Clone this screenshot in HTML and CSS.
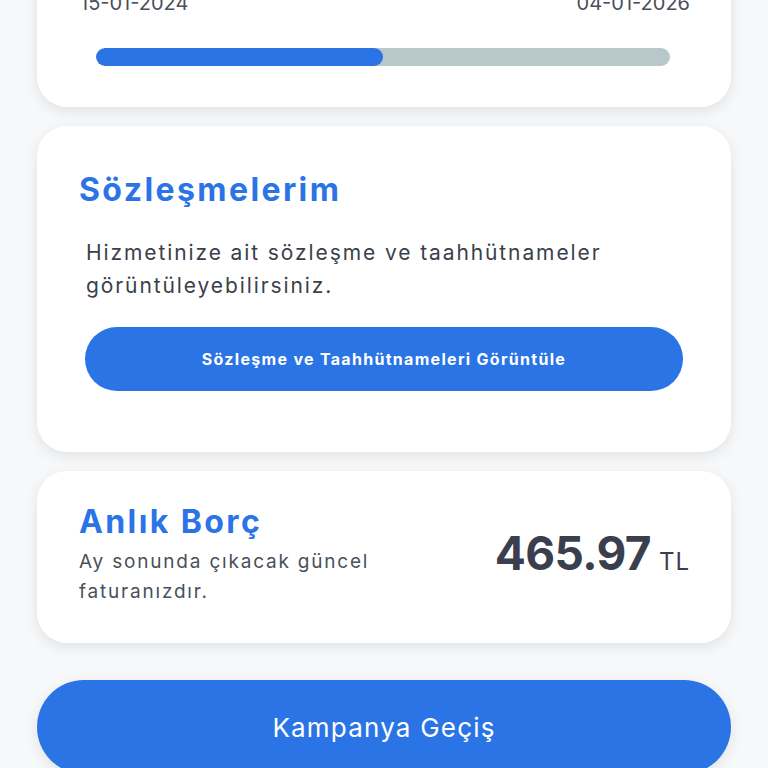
FILE: index.html
```html
<!DOCTYPE html>
<html lang="tr">
<head>
  <meta charset="UTF-8" />
  <title>Hizmetlerim</title>
  <link rel="stylesheet" href="styles.css">
</head>
<body>
  <div class="page">
    <div class="card period">
      <div class="dates">
        <span>15-01-2024</span>
        <span>04-01-2026</span>
      </div>
      <div class="bar"><div class="fill" style="width: 50%"></div></div>
    </div>

    <div class="card contracts">
      <h2 class="title">Sözleşmelerim</h2>
      <p class="desc">Hizmetinize ait sözleşme ve taahhütnameler görüntüleyebilirsiniz.</p>
      <button class="btn-small">Sözleşme ve Taahhütnameleri Görüntüle</button>
    </div>

    <div class="card debt">
      <div class="debt-info">
        <h2 class="title">Anlık Borç</h2>
        <p class="sub">Ay sonunda çıkacak güncel faturanızdır.</p>
      </div>
      <div class="amount">465.97<span class="cur">TL</span></div>
    </div>

    <button class="btn-big">Kampanya Geçiş</button>
  </div>
</body>
</html>
```

FILE: styles.css
```css
html, body { margin: 0; padding: 0; }
body { font-family: "Inter", "Open Sans", sans-serif; background: #f7f8fa; color: #3b3f4a; overflow: hidden; height: 768px; }
.page { padding: 0 37px; display: flex; flex-direction: column; }

.card { background: #fff; border-radius: 30px; box-shadow: 0 4px 14px rgba(0,0,0,0.09); }

.period { margin-top: -60px; padding: 51px 41px 41px 43px; }
.dates { display: flex; justify-content: space-between; font-size: 20px; line-height: 24px; color: #4a4f5a; }
.bar { margin: 33px 20px 0 16px; height: 18px; background: #b8c7c9; border-radius: 9px; overflow: hidden; }
.fill { height: 100%; background: #2b74e6; border-radius: 9px; }

.contracts { margin-top: 19px; padding: 44px 48px 61px 42px; }
.title { margin: 0; font-size: 32px; line-height: 40px; font-weight: 700; letter-spacing: 2.4px; color: #2b74e6; }
.desc { margin: 26px 0 0 7px; font-size: 21px; line-height: 33px; letter-spacing: 1.9px; color: #3b3f4a; }
.btn-small { margin: 25px 0 0 6px; width: calc(100% - 6px); height: 64px; border: none; border-radius: 32px; background: #2b74e6; color: #fff; font-family: inherit; font-size: 16px; font-weight: 700; letter-spacing: 1.3px; cursor: pointer; }

.debt { margin-top: 19px; padding: 31px 41px 36px 42px; display: flex; align-items: center; justify-content: space-between; }
.sub { margin: 5px 0 0; font-size: 19px; line-height: 30px; letter-spacing: 1.8px; width: 320px; color: #4a4f5a; }
.amount { margin-top: -3px; font-size: 46px; font-weight: 700; letter-spacing: -0.6px; color: #3a3f50; display: flex; align-items: baseline; }
.cur { font-size: 24px; font-weight: 400; letter-spacing: 1px; margin-left: 8px; }

.btn-big { margin-top: 37px; height: 94px; border: none; border-radius: 47px; background: #2b74e6; color: #fff; font-family: inherit; font-size: 26px; letter-spacing: 1.2px; box-shadow: 0 4px 14px rgba(0,0,0,0.09); cursor: pointer; }
```
